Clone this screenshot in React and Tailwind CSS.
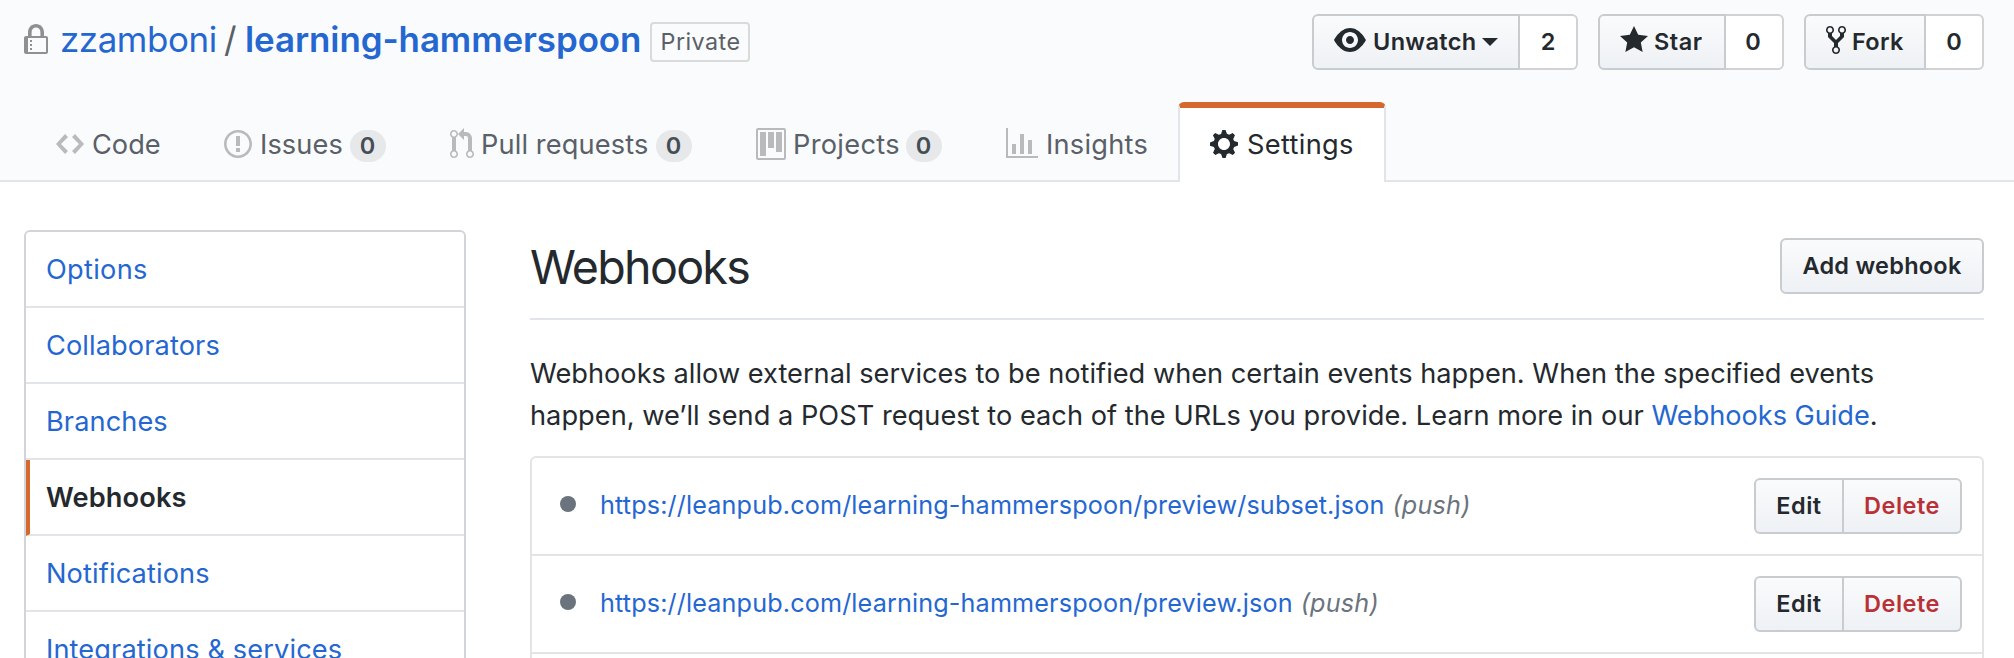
const ICONS = {
  lock: [12, "M4 13H3v-1h1v1zm8-6v7c0 .55-.45 1-1 1H1c-.55 0-1-.45-1-1V7c0-.55.45-1 1-1h1V4c0-2.2 1.8-4 4-4s4 1.8 4 4v2h1c.55 0 1 .45 1 1zM3.8 6h4.41V4c0-1.22-.98-2.2-2.2-2.2-1.22 0-2.2.98-2.2 2.2v2H3.8zM11 7H2v7h9V7zM4 8H3v1h1V8zm0 2H3v1h1v-1z"],
  code: [14, "M9.5 3L8 4.5 11.5 8 8 11.5 9.5 13 14 8 9.5 3zm-5 0L0 8l4.5 5L6 11.5 2.5 8 6 4.5 4.5 3z"],
  issue: [14, "M7 2.3c3.14 0 5.7 2.56 5.7 5.7s-2.56 5.7-5.7 5.7A5.71 5.71 0 0 1 1.3 8c0-3.14 2.56-5.7 5.7-5.7zM7 1C3.14 1 0 4.14 0 8s3.14 7 7 7 7-3.14 7-7-3.14-7-7-7zm1 3H6v5h2V4zm0 6H6v2h2v-2z"],
  pull: [12, "M11 11.28V5c-.03-.78-.34-1.47-.94-2.06C9.46 2.35 8.78 2.03 8 2H7V0L4 3l3 3V4h1c.27.02.48.11.69.31.21.2.3.42.31.69v6.28A1.993 1.993 0 0 0 10 15a1.993 1.993 0 0 0 1-3.72zm-1 2.92c-.66 0-1.2-.55-1.2-1.2 0-.65.55-1.2 1.2-1.2.65 0 1.2.55 1.2 1.2 0 .65-.55 1.2-1.2 1.2zM4 3c0-1.11-.89-2-2-2a1.993 1.993 0 0 0-1 3.72v6.56A1.993 1.993 0 0 0 2 15a1.993 1.993 0 0 0 1-3.72V4.72c.59-.34 1-.98 1-1.72zm-.8 10c0 .66-.55 1.2-1.2 1.2-.65 0-1.2-.55-1.2-1.2 0-.65.55-1.2 1.2-1.2.65 0 1.2.55 1.2 1.2zM2 4.2C1.34 4.2.8 3.65.8 3c0-.65.55-1.2 1.2-1.2.65 0 1.2.55 1.2 1.2 0 .65-.55 1.2-1.2 1.2z"],
  project: [15, "M10 12h3V2h-3v10zm-4-2h3V2H6v8zm-4 4h3V2H2v12zm-1 1h13V1H1v14zM14 0H1a1 1 0 0 0-1 1v14a1 1 0 0 0 1 1h13a1 1 0 0 0 1-1V1a1 1 0 0 0-1-1z"],
  graph: [16, "M16 14v1H0V0h1v14h15zM5 13H3V8h2v5zm4 0H7V3h2v10zm4 0h-2V6h2v7z"],
  gear: [14, "M14 8.77v-1.6l-1.94-.64-.45-1.09.88-1.84-1.13-1.13-1.81.91-1.09-.45-.69-1.92h-1.6l-.63 1.94-1.11.45-1.84-.88-1.13 1.13.91 1.81-.45 1.09L0 7.23v1.59l1.94.64.45 1.09-.88 1.84 1.13 1.13 1.81-.91 1.09.45.69 1.92h1.59l.63-1.94 1.11-.45 1.84.88 1.13-1.13-.92-1.81.47-1.09L14 8.75v.02zM7 11c-1.66 0-3-1.34-3-3s1.34-3 3-3 3 1.34 3 3-1.34 3-3 3z"],
  eye: [16, "M8.06 2C3 2 0 8 0 8s3 6 8.06 6C13 14 16 8 16 8s-3-6-7.94-6zM8 12c-2.2 0-4-1.78-4-4 0-2.2 1.8-4 4-4 2.22 0 4 1.8 4 4 0 2.22-1.78 4-4 4zm2-4c0 1.11-.89 2-2 2-1.11 0-2-.89-2-2 0-1.11.89-2 2-2 1.11 0 2 .89 2 2z"],
  star: [14, "M14 6l-4.9-.64L7 1 4.9 5.36 0 6l3.6 3.26L2.67 14 7 11.67 11.33 14l-.93-4.74L14 6z"],
  fork: [10, "M8 1a1.993 1.993 0 0 0-1 3.72V6L5 8 3 6V4.72A1.993 1.993 0 0 0 2 1a1.993 1.993 0 0 0-1 3.72V6.5l3 3v1.78A1.993 1.993 0 0 0 5 15a1.993 1.993 0 0 0 1-3.72V9.5l3-3V4.72A1.993 1.993 0 0 0 8 1zM2 4.2C1.34 4.2.8 3.65.8 3c0-.65.55-1.2 1.2-1.2.65 0 1.2.55 1.2 1.2 0 .65-.55 1.2-1.2 1.2zm3 10c-.66 0-1.2-.55-1.2-1.2 0-.65.55-1.2 1.2-1.2.65 0 1.2.55 1.2 1.2 0 .65-.55 1.2-1.2 1.2zm3-10c-.66 0-1.2-.55-1.2-1.2 0-.65.55-1.2 1.2-1.2.65 0 1.2.55 1.2 1.2 0 .65-.55 1.2-1.2 1.2z"],
};

function Icon({ name, className = "" }) {
  const [width, d] = ICONS[name];
  return (
    <svg width={width * 2} height="32" viewBox={`0 0 ${width} 16`} fill="currentColor" className={`shrink-0 ${className}`}>
      <path fillRule="evenodd" d={d} />
    </svg>
  );
}

const BUTTON =
  "flex items-center border-2 border-[#c9cccf] bg-linear-to-b from-[#fafbfc] to-[#eef1f5] text-[23.5px] font-semibold";

function SocialButton({ icon, label, count, caret, className, labelClass, countClass = "" }) {
  return (
    <div className="flex h-14">
      <button className={`${BUTTON} rounded-l-md pl-5 ${className}`}>
        <Icon name={icon} className="-mt-1" />
        <span className={labelClass}>{label}</span>
        {caret && (
          <svg width="16" height="8" viewBox="0 0 16 8" fill="currentColor" className="ml-auto shrink-0">
            <path d="M0 0h16L8 8z" />
          </svg>
        )}
      </button>
      <a className={`flex w-[58px] items-center justify-center rounded-r-md border-2 border-l-0 border-[#d1d2d4] bg-white text-[23.5px] font-semibold ${countClass}`}>
        {count}
      </a>
    </div>
  );
}

function Tab({ icon, label, count, className, labelClass }) {
  return (
    <a className={`flex items-center pt-1 pl-[30px] text-[27.2px] text-[#596068] ${className}`}>
      <Icon name={icon} className="text-[#b9babc]" />
      <span className={`pt-0.5 ${labelClass}`}>{label}</span>
      {count !== undefined && (
        <span className="mt-1 flex h-8 w-9 items-center justify-center rounded-full bg-[#e7e8ea] pr-px text-[23.5px] font-semibold text-[#454d55]">
          {count}
        </span>
      )}
    </a>
  );
}

const MENU = [
  ["Options", "tracking-[0.3px]"],
  ["Collaborators", "tracking-[0.1px]"],
  ["Branches", "tracking-[0.08px]"],
  ["Webhooks", "tracking-[0.12px]"],
  ["Notifications", "tracking-[0.12px]"],
  ["Integrations & services", "tracking-[0.12px]"],
];

function Menu() {
  return (
    <nav className="flex w-[442px] shrink-0 flex-col self-start rounded-md border-2 border-[#d1d5da]">
      {MENU.map(([label, tracking]) => (
        <a
          key={label}
          className={`flex h-[76px] items-center border-b-2 border-b-[#e1e4e8] pt-0.5 text-[27.2px] ${tracking} ${
            label === "Webhooks"
              ? "border-l-4 border-l-[#d5682c] pl-4 font-semibold text-[#24292e]"
              : "pl-5 text-[#2567d1]"
          }`}
        >
          {label}
        </a>
      ))}
    </nav>
  );
}

const HOOKS = [
  "https://leanpub.com/learning-hammerspoon/preview/subset.json",
  "https://leanpub.com/learning-hammerspoon/preview.json",
];

function Hook({ url }) {
  return (
    <li className="flex h-[98px] items-center border-b-2 border-[#e3e4e5] pr-5 pl-7">
      <span className="-mt-1 size-4 rounded-full bg-[#6b737d]" />
      <a className="ml-6 text-[25.2px] tracking-[0.14px] text-[#2567d1]">{url}</a>
      <em className="ml-2 text-[25.2px] tracking-[0.2px] text-[#6b737d]">(push)</em>
      <div className="ml-auto flex h-14">
        <button className={`${BUTTON} w-[90px] justify-center rounded-l-md tracking-[0.5px]`}>Edit</button>
        <button className={`${BUTTON} w-[118px] justify-center rounded-r-md border-l-0 tracking-[0.5px] text-[#b93136]`}>
          Delete
        </button>
      </div>
    </li>
  );
}

export default function App() {
  return (
    <div className="h-[658px] w-[2014px] overflow-hidden bg-white font-['Inter',sans-serif] whitespace-nowrap text-[#24292e]">
      <header className="h-[182px] bg-[#fafbfc]">
        <div className="flex h-[102px] items-start pr-[30px] pl-6">
          <Icon name="lock" className="mt-6 text-[#8f9091]" />
          <h1 className="mt-5 ml-3 flex text-[34.9px] leading-[39px]">
            <a className="w-[164px] tracking-[-0.42px] text-[#2567d1]">zzamboni</a>
            <span className="w-[21px] text-[#596068]">/</span>
            <a className="w-[405px] font-semibold tracking-[-0.07px] text-[#2567d1]">learning-hammerspoon</a>
          </h1>
          <span className="mt-[22px] flex h-10 w-[100px] items-center justify-center rounded border-2 border-[#d9dadc] pl-px text-[23.3px] tracking-[0.45px] text-[#596068]">
            Private
          </span>
          <div className="mt-3.5 ml-auto flex gap-5">
            <SocialButton icon="eye" label="Unwatch" count="2" caret className="w-52 pr-5" labelClass="ml-[7px] tracking-[0.35px]" />
            <SocialButton icon="star" label="Star" count="0" className="w-32" labelClass="ml-[6px] tracking-[0.5px]" countClass="pr-0.5" />
            <SocialButton icon="fork" label="Fork" count="0" className="w-[122px]" labelClass="ml-[6px] tracking-[0.3px]" />
          </div>
        </div>
        <nav className="flex h-20 pl-[26px] shadow-[inset_0_-2px_0_#e1e4e8]">
          <Tab icon="code" label="Code" className="w-[168px]" labelClass="ml-2" />
          <Tab icon="issue" label="Issues" count="0" className="w-[226px]" labelClass="ml-2 w-[90px] tracking-[0.1px]" />
          <Tab icon="pull" label="Pull requests" count="0" className="w-[306px]" labelClass="ml-[7px] w-[175px] tracking-[0.12px]" />
          <Tab icon="project" label="Projects" count="0" className="w-[250px]" labelClass="ml-[7px] w-[113px] tracking-[0.3px]" />
          <Tab icon="graph" label="Insights" className="w-[202px]" labelClass="ml-[8px] tracking-[0.25px]" />
          <a className="flex w-[208px] items-center rounded-t-md border-x-2 border-t-6 border-x-[#e1e4e8] border-t-[#d5682c] bg-white pb-0.5 pl-[30px] text-[27.2px] tracking-[0.33px]">
            <Icon name="gear" />
            <span className="ml-[9px] pt-0.5">Settings</span>
          </a>
        </nav>
      </header>

      <div className="flex gap-16 pt-12 pr-[30px] pl-6">
        <Menu />
        <main className="flex-1">
          <div className="flex h-[90px] items-start justify-between border-b-2 border-[#e1e4e8]">
            <h2 className="mt-[11px] text-[46.6px] leading-[52px] tracking-[-1.72px]">Webhooks</h2>
            <button className={`${BUTTON} mt-2 h-14 w-[204px] justify-center rounded-md tracking-[0.25px]`}>Add webhook</button>
          </div>
          <p className="mt-[33px] text-[27.2px] leading-[42px] tracking-[0.01px]">
            Webhooks allow external services to be notified when certain events happen. When the specified events
            <br />
            <span className="tracking-[0.03px]">
              happen, we’ll send a POST request to each of the URLs you provide. Learn more in our{" "}
            </span>
            <a className="tracking-[-0.05px] text-[#2567d1]">Webhooks Guide</a>.
          </p>
          <ul className="mt-[19px] h-[300px] rounded-md border-2 border-[#e3e4e5]">
            {HOOKS.map((url) => (
              <Hook key={url} url={url} />
            ))}
          </ul>
        </main>
      </div>
    </div>
  );
}
